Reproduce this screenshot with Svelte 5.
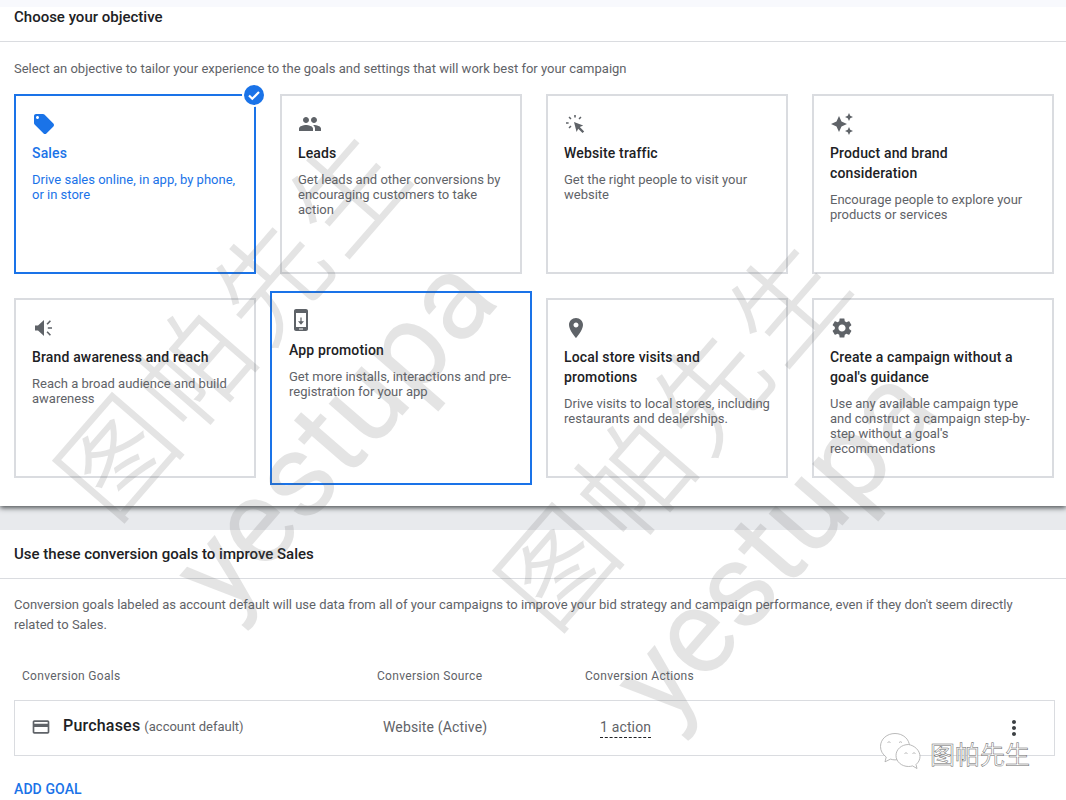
<script>
  const P = {
    tag: 'M21.41 11.58l-9-9C12.05 2.22 11.55 2 11 2H4c-1.1 0-2 .9-2 2v7c0 .55.22 1.05.59 1.42l9 9c.36.36.86.58 1.41.58.55 0 1.05-.22 1.41-.59l7-7c.37-.36.59-.86.59-1.41 0-.55-.23-1.06-.59-1.42zM5.5 7C4.67 7 4 6.33 4 5.5S4.67 4 5.5 4 7 4.67 7 5.5 6.33 7 5.5 7z',
    people: 'M16 11c1.66 0 2.99-1.34 2.99-3S17.66 5 16 5c-1.66 0-3 1.34-3 3s1.34 3 3 3zm-8 0c1.66 0 2.99-1.34 2.99-3S9.66 5 8 5C6.34 5 5 6.34 5 8s1.34 3 3 3zm0 2c-2.33 0-7 1.17-7 3.5V19h14v-2.5c0-2.33-4.67-3.5-7-3.5zm8 0c-.29 0-.62.02-.97.05 1.16.84 1.97 1.97 1.97 3.45V19h6v-2.5c0-2.33-4.67-3.5-7-3.5z',
    click: 'M10 10l9.200 3.500-3.400 1.600 4.400 4.300-1.700 1.700-4.300-4.400-1.600 3.400zM10.200 3h1.600v2.600h-1.600zM2 10.200h2.600v1.600H2zM5.600 4.500l1.900 1.900-1.100 1.100-1.900-1.900zM16.400 4.500l1.100 1.100-1.900 1.900-1.100-1.100zM6.400 13.500l1.100 1.100-1.900 1.900-1.100-1.100z',
    spark: 'M19 9l1.25-2.75L23 5l-2.75-1.25L19 1l-1.25 2.75L15 5l2.75 1.25L19 9zm-7.5.5L9 4 6.5 9.5 1 12l5.5 2.5L9 20l2.5-5.5L17 12l-5.500-2.500zM19 15l-1.25 2.75L15 19l2.75 1.25L19 23l1.25-2.75L23 19l-2.75-1.25L19 15z',
    horn: 'M3 9.500v5h3l6 5.500V4L6 9.500zM15.800 11.200h4.200v1.600h-4.200zM17.800 4.200l1.200 1-3.300 3.500-1.200-1zM15.700 15.300l3.300 3.500-1.200 1-3.300-3.500z',
    phone: 'M17 1H7C5.900 1 5 1.900 5 3v18c0 1.100.9 2 2 2h10c1.100 0 2-.9 2-2V3c0-1.100-.9-2-2-2zM17 19H7V5h10zM10 20.400h4v1.100h-4zM11.400 9.500h1.200v3.700H15l-3 3.500-3-3.500h2.400z',
    place: 'M12 2C8.130 2 5 5.130 5 9c0 5.250 7 13 7 13s7-7.750 7-13c0-3.870-3.130-7-7-7zm0 9.500c-1.380 0-2.500-1.120-2.500-2.500s1.120-2.500 2.500-2.500 2.500 1.120 2.500 2.500-1.120 2.500-2.500 2.500z',
    gear: 'M19.14 12.94c.04-.3.06-.61.06-.94 0-.32-.02-.64-.07-.94l2.03-1.58c.18-.14.23-.41.12-.61l-1.92-3.32c-.12-.22-.37-.29-.59-.22l-2.39.96c-.5-.38-1.03-.7-1.62-.94l-.36-2.54c-.04-.24-.24-.41-.48-.41h-3.84c-.24 0-.43.17-.47.41l-.36 2.54c-.59.24-1.13.57-1.62.94l-2.39-.96c-.22-.08-.47 0-.59.22L2.74 8.87c-.12.21-.08.47.12.61l2.03 1.58c-.05.3-.09.63-.09.94s.02.64.07.94l-2.03 1.58c-.18.14-.23.41-.12.61l1.92 3.32c.12.22.37.29.59.22l2.39-.96c.5.38 1.03.7 1.62.94l.36 2.54c.05.24.24.41.48.41h3.84c.24 0 .44-.17.47-.41l.36-2.54c.59-.24 1.13-.56 1.62-.94l2.39.96c.22.08.47 0 .59-.22l1.92-3.32c.12-.22.07-.47-.12-.61l-2.01-1.58zM12 15.6c-1.98 0-3.6-1.62-3.6-3.6s1.62-3.6 3.6-3.6 3.6 1.62 3.6 3.6-1.62 3.6-3.6 3.6z'
  };
  const cards = [
    { icon: P.tag, title: 'Sales', desc: 'Drive sales online, in app, by phone, or in store', kind: 'selected' },
    { icon: P.people, title: 'Leads', desc: 'Get leads and other conversions by encouraging customers to take action' },
    { icon: P.click, title: 'Website traffic', desc: 'Get the right people to visit your website' },
    { icon: P.spark, title: 'Product and brand consideration', desc: 'Encourage people to explore your products or services' },
    { icon: P.horn, title: 'Brand awareness and reach', desc: 'Reach a broad audience and build awareness' },
    { icon: P.phone, title: 'App promotion', desc: 'Get more installs, interactions and pre-registration for your app', kind: 'hover' },
    { icon: P.place, title: 'Local store visits and promotions', desc: 'Drive visits to local stores, including restaurants and dealerships.' },
    { icon: P.gear, title: "Create a campaign without a goal's guidance", desc: "Use any available campaign type and construct a campaign step-by-step without a goal's recommendations" }
  ];
</script>

<div class="page">
  <div class="strip"></div>
  <section class="panel first">
    <h2 class="head">Choose your objective</h2>
    <div class="body">
      <p class="intro">Select an objective to tailor your experience to the goals and settings that will work best for your campaign</p>
      <div class="grid">
        {#each cards as c}
          <div class="card {c.kind ?? ''}">
            <svg class="icon" viewBox="0 0 24 24"><path d={c.icon} /></svg>
            <div class="title">{c.title}</div>
            <div class="desc">{c.desc}</div>
            {#if c.kind === 'selected'}
              <svg class="check" viewBox="0 0 24 24">
                <circle cx="12" cy="12" r="12" fill="#fff" />
                <circle cx="12" cy="12" r="10" fill="#1a73e8" />
                <path d="M7 12.500l3.300 3.300L17 9" fill="none" stroke="#fff" stroke-width="2.200" />
              </svg>
            {/if}
          </div>
        {/each}
      </div>
    </div>
  </section>
  <div class="gap"></div>
  <section class="panel">
    <h2 class="head two">Use these conversion goals to improve Sales</h2>
    <div class="body goals">
      <p class="note">Conversion goals labeled as account default will use data from all of your campaigns to improve your bid strategy and campaign performance, even if they don't seem directly related to Sales.</p>
      <div class="cols">
        <span>Conversion Goals</span>
        <span>Conversion Source</span>
        <span>Conversion Actions</span>
      </div>
      <div class="row">
        <div class="goal">
          <svg class="card-ic" viewBox="0 0 24 24"><path d="M20 4H4c-1.110 0-1.990.89-1.990 2L2 18c0 1.110.89 2 2 2h16c1.110 0 2-.89 2-2V6c0-1.110-.89-2-2-2zm0 14H4v-6h16v6zm0-10H4V6h16v2z" /></svg>
          <span class="name">Purchases</span>
          <span class="def">(account default)</span>
        </div>
        <div class="src">Website (Active)</div>
        <div class="act"><span class="dash">1 action</span></div>
        <svg class="more" viewBox="0 0 24 24"><path d="M12 8c1.100 0 2-.9 2-2s-.9-2-2-2-2 .9-2 2 .9 2 2 2zm0 2c-1.100 0-2 .9-2 2s.9 2 2 2 2-.9 2-2-.9-2-2-2zm0 6c-1.100 0-2 .9-2 2s.9 2 2 2 2-.9 2-2-.9-2-2-2z" /></svg>
      </div>
      <div class="add">ADD GOAL</div>
    </div>
  </section>

  <div class="mark m1">图帕先生</div>
  <div class="mark latin l1">yestupa</div>
  <div class="mark m2">图帕先生</div>
  <div class="mark latin l2">yestupa</div>

  <div class="brand">
    <svg class="wx" viewBox="0 0 41 36" fill="#fff" stroke="#a8a8a8" stroke-width=".8">
      <path d="M15 .5C7 .5.500 6 .500 13.500c0 4.500 2.300 8 5.700 10.500L5 28.800l5.500-2.700c1.500.5 3 .8 4.500.8 8 0 14.500-6 14.500-13.400S23 .5 15 .5z" />
      <path d="M28.500 11.500C21.500 11.500 16 16.400 16 22.500s5.500 11 12.500 11c1.500 0 2.800-.2 4-.6l4.500 2.600-1-4c2.500-2 4-4.900 4-8 0-6.100-5.500-11-11.500-12z" />
      <path d="M7.500 9.500q1.500-1.500 3 0M19 9.500q1.500-1.500 3 0M24.500 20.500q1.500-1.500 3 0M32.500 20.500q1.500-1.500 3 0" fill="none" />
    </svg>
    <span>图帕先生</span>
  </div>
</div>

<style>
  :global(body) { margin: 0; background: #fff; }
  .page {
    position: relative;
    width: 1066px;
    height: 800px;
    overflow: hidden;
    font-family: Roboto, "Liberation Sans", sans-serif;
    color: #202124;
  }
  .strip { height: 7px; background: #f8f9fd; }
  .panel { background: #fff; }
  .first {
    height: 499px;
    position: relative;
    box-shadow: 0 2px 5px rgba(40, 44, 47, .8);
    clip-path: inset(0 0 -14px 0);
  }
  .gap { height: 24px; background: #e8eaed; }
  .head {
    margin: 0;
    font-size: 15px;
    font-weight: 500;
    line-height: 20px;
    padding: 0 14px 14px;
    border-bottom: 1px solid #dadce0;
  }
  .head.two { padding: 14px; }
  .body { padding: 0 14px; }
  .intro {
    margin: 0;
    padding: 19px 0 18px;
    font-size: 13px;
    line-height: 15px;
    color: #5f6368;
  }
  .grid {
    display: grid;
    grid-template-columns: repeat(4, 242px);
    grid-auto-rows: 180px;
    gap: 24px;
  }
  .card {
    position: relative;
    box-sizing: border-box;
    background: #fff;
    border: 2px solid #dadce0;
    padding: 16px;
  }
  .card.selected { border-color: #1a73e8; }
  .card.hover {
    border-color: #1a73e8;
    margin: -7px -10px;
    padding: 15px 17px;
  }
  .icon { display: block; width: 24px; height: 24px; fill: #5f6368; fill-rule: evenodd; }
  .selected .icon { fill: #1a73e8; }
  .title {
    margin-top: 7px;
    max-width: 195px;
    font-size: 14px;
    font-weight: 500;
    line-height: 20px;
    letter-spacing: .15px;
  }
  .hover .title { margin-top: 8px; }
  .selected .title { color: #1a73e8; }
  .desc {
    margin-top: 9px;
    font-size: 13px;
    line-height: 15px;
    color: #5f6368;
  }
  .selected .desc { color: #1a73e8; }
  .check {
    position: absolute;
    top: -13px;
    right: -12px;
    width: 24px;
    height: 24px;
  }
  .note {
    margin: 0;
    padding: 16px 0 0;
    font-size: 13px;
    line-height: 20px;
    color: #5f6368;
  }
  .cols {
    display: grid;
    grid-template-columns: 355px 208px 1fr;
    padding: 33px 0 0 8px;
    font-size: 12px;
    line-height: 16px;
    letter-spacing: .3px;
    color: #5f6368;
  }
  .row {
    display: grid;
    grid-template-columns: 368px 217px 1fr 24px;
    align-items: center;
    box-sizing: border-box;
    height: 56px;
    width: 1041px;
    margin-top: 16px;
    padding-right: 28px;
    border: 1px solid #dadce0;
    font-size: 14px;
    letter-spacing: .15px;
    color: #5f6368;
  }
  .goal { display: flex; align-items: center; padding: 0 0 5px 16px; }
  .card-ic { width: 20px; height: 20px; fill: #5f6368; margin: 2px 12px 0 0; }
  .name { font-size: 16px; font-weight: 500; letter-spacing: .2px; color: #202124; margin-right: 4px; }
  .def { font-size: 13px; letter-spacing: 0; padding-top: 2px; }
  .src { padding-bottom: 2px; }
  .act { padding-bottom: 2px; }
  .dash { border-bottom: 1px dashed #202124; padding-bottom: 2px; }
  .more { width: 24px; height: 24px; fill: #3c4043; }
  .add {
    margin-top: 25px;
    font-size: 14px;
    font-weight: 500;
    line-height: 16px;
    letter-spacing: .1px;
    color: #1a73e8;
  }
  .mark {
    position: absolute;
    white-space: nowrap;
    pointer-events: none;
    font-family: "Noto Sans CJK SC", sans-serif;
    font-size: 110px;
    letter-spacing: 7px;
    line-height: 1;
    font-weight: 300;
    color: #646464;
    -webkit-text-stroke: 1.5px #646464;
    opacity: .17;
    transform: translate(-50%, -50%) rotate(-49deg);
  }
  .latin {
    font-family: Roboto, sans-serif;
    font-size: 120px;
    font-weight: 400;
    letter-spacing: 0;
    -webkit-text-stroke: 0;
  }
  .m1 { left: 229px; top: 317px; }
  .l1 { left: 333px; top: 433px; }
  .m2 { left: 669px; top: 427px; }
  .l2 { left: 773px; top: 543px; }
  .brand {
    position: absolute;
    left: 880px;
    top: 733px;
    display: flex;
    align-items: flex-start;
    gap: 9px;
  }
  .wx { display: block; width: 41px; height: 36px; }
  .brand span {
    font-family: "Noto Sans CJK SC", sans-serif;
    font-size: 25px;
    line-height: 40px;
    color: #fff;
    -webkit-text-stroke: .5px #666;
  }
</style>
